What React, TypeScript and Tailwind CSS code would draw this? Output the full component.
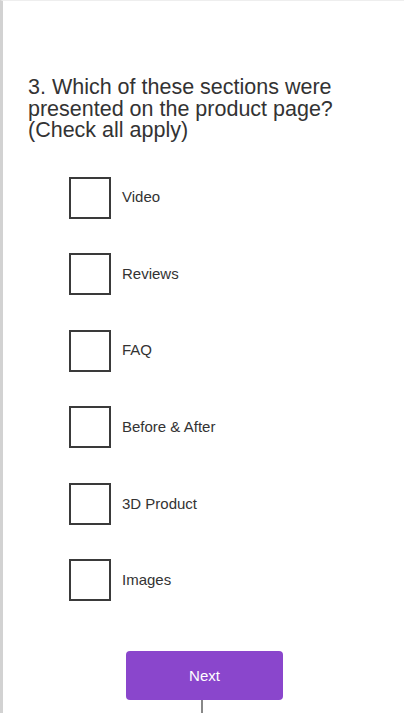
import React, { useState } from 'react';

const options = ['Video', 'Reviews', 'FAQ', 'Before & After', '3D Product', 'Images'];

export default function App() {
  const [checked, setChecked] = useState<string[]>([]);

  const toggle = (o: string) =>
    setChecked(prev => (prev.includes(o) ? prev.filter(x => x !== o) : [...prev, o]));

  return (
    <div className="h-[713px] w-[404px] overflow-hidden bg-white border-l-[3px] border-l-[#d2d2d2] border-t border-t-[#eeeeee] font-['Liberation_Sans',Arial,sans-serif] text-[#333]">
      <div className="pl-[25px] pt-[76px]">
        <h1 className="text-[21.5px] leading-[21.5px]">
          3. Which of these sections were
          <br />
          presented on the product page?
          <br />
          (Check all apply)
        </h1>
      </div>

      <div className="mt-[35px] pl-[66px] flex flex-col gap-[34.6px]">
        {options.map(o => (
          <label key={o} className="flex items-center cursor-pointer">
            <button
              type="button"
              onClick={() => toggle(o)}
              className="h-[42px] w-[42px] shrink-0 border-2 border-[#3a3a3a] bg-white flex items-center justify-center"
            >
              {checked.includes(o) && <span className="h-[22px] w-[22px] bg-[#8a46cc]" />}
            </button>
            <span className="ml-[11px] text-[15px] text-[#333]">{o}</span>
          </label>
        ))}
      </div>

      <div className="mt-[50px] flex flex-col items-center">
        <button className="h-[49px] w-[157px] rounded-[4px] bg-[#8a46cc] text-white text-[15px] ml-[2px]">
          Next
        </button>
        <div className="h-[20px] w-[2px] bg-[#888] ml-[-3px]" />
      </div>
    </div>
  );
}
